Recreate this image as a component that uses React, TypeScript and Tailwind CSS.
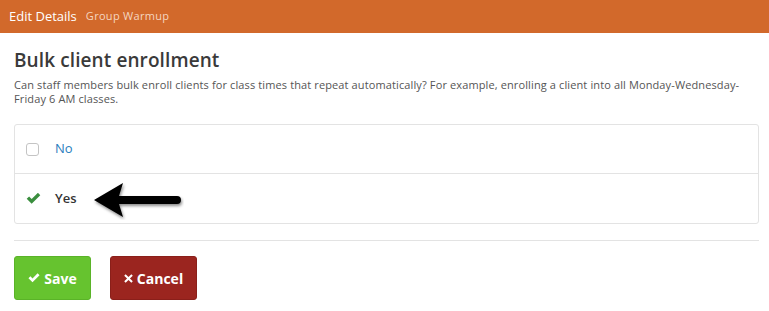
import React, { useState } from 'react';

function CheckIcon({ className }: { className?: string }) {
  return (
    <svg viewBox="0 0 16 12" className={className} fill="currentColor">
      <path d="M0.6 6.4 L3.2 3.8 L6 6.6 L12.8 -0.2 L15.4 2.4 L6 11.8 Z" />
    </svg>
  );
}

function CrossIcon({ className }: { className?: string }) {
  return (
    <svg viewBox="0 0 12 12" className={className} fill="currentColor">
      <path d="M2.2 0.3 L6 4.1 L9.8 0.3 L11.7 2.2 L7.9 6 L11.7 9.8 L9.8 11.7 L6 7.9 L2.2 11.7 L0.3 9.8 L4.1 6 L0.3 2.2 Z" />
    </svg>
  );
}

function PointerArrow() {
  return (
    <svg
      viewBox="0 0 92 38"
      className="absolute left-[92px] top-[182px] w-[92px] h-[38px]"
    >
      <defs>
        <filter id="arrowShadow" x="-20%" y="-30%" width="140%" height="170%">
          <feDropShadow dx="1" dy="2" stdDeviation="1.5" floodColor="#000" floodOpacity="0.45" />
        </filter>
      </defs>
      <g filter="url(#arrowShadow)">
        <path d="M2 18 L31 1 L27 14 L85 14 Q89 14 89 18 Q89 22 85 22 L27 22 L31 35 Z" fill="#000" />
      </g>
    </svg>
  );
}

export default function App() {
  const [value, setValue] = useState<'no' | 'yes'>('yes');

  return (
    <div className="relative w-[769px] h-[311px] bg-white font-['Open_Sans','Lato',sans-serif] overflow-hidden">
      {/* Header */}
      <div className="h-[33px] bg-[#d2692b] flex items-center px-[9px] gap-[9px]">
        <span className="text-[13px] text-white">Edit Details</span>
        <span className="text-[11px] text-[#f5d6c0] tracking-[0.3px]">Group Warmup</span>
      </div>

      <div className="px-[14px] pr-[10px]">
        <h1 className="mt-[14px] text-[19px] font-semibold text-[#3a3a3a] leading-[26px] tracking-[0.1px]">
          Bulk client enrollment
        </h1>
        <p className="mt-[5px] w-[740px] text-[11px] leading-[14px] text-[#555] tracking-[0.12px]">
          Can staff members bulk enroll clients for class times that repeat automatically? For example, enrolling a
          client into all Monday-Wednesday-Friday 6 AM classes.
        </p>

        {/* Options */}
        <div className="mt-[18px] border border-[#e3e3e3] rounded-[3px]">
          <button
            type="button"
            onClick={() => setValue('no')}
            className="w-full h-[49px] flex items-center pl-[11px] border-b border-[#e3e3e3] text-left"
          >
            {value === 'no' ? (
              <CheckIcon className="w-[15px] h-[11px] text-[#3a8e3e]" />
            ) : (
              <span className="w-[13px] h-[13px] border-[1.5px] border-[#c4c4c4] rounded-[3px] bg-white" />
            )}
            <span
              className={
                value === 'no'
                  ? 'ml-[14px] text-[13px] font-semibold text-[#333]'
                  : 'ml-[16px] text-[13px] text-[#2a7dbd]'
              }
            >
              No
            </span>
          </button>
          <button
            type="button"
            onClick={() => setValue('yes')}
            className="w-full h-[49px] flex items-center pl-[11px] text-left"
          >
            {value === 'yes' ? (
              <CheckIcon className="w-[15px] h-[11px] text-[#3a8e3e]" />
            ) : (
              <span className="w-[13px] h-[13px] border-[1.5px] border-[#c4c4c4] rounded-[3px] bg-white" />
            )}
            <span
              className={
                value === 'yes'
                  ? 'ml-[14px] text-[13px] font-semibold text-[#333]'
                  : 'ml-[16px] text-[13px] text-[#2a7dbd]'
              }
            >
              Yes
            </span>
          </button>
        </div>

        <div className="mt-[16px] border-t border-[#e3e3e3]" />

        {/* Actions */}
        <div className="mt-[15px] flex gap-[19px]">
          <button
            type="button"
            className="w-[77px] h-[44px] bg-[#66c32f] border border-[#5ab328] rounded-[3px] text-white text-[14px] font-bold flex items-center justify-center gap-[4px]"
          >
            <CheckIcon className="w-[12px] h-[10px]" />
            Save
          </button>
          <button
            type="button"
            className="w-[87px] h-[44px] bg-[#9b251f] border border-[#8a1f1a] rounded-[3px] text-white text-[14px] font-bold flex items-center justify-center gap-[4px]"
          >
            <CrossIcon className="w-[9px] h-[9px]" />
            Cancel
          </button>
        </div>
      </div>

      <PointerArrow />
    </div>
  );
}
